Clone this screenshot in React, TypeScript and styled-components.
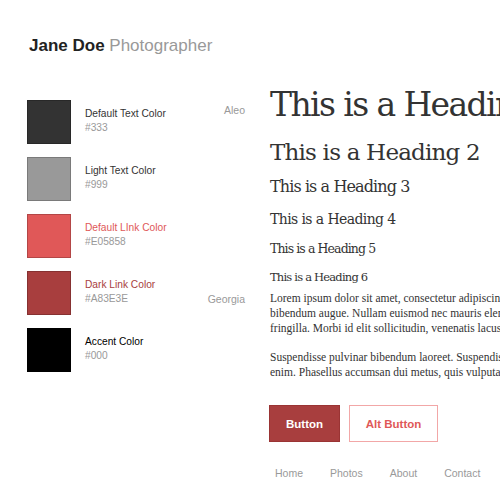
import React from "react";
import styled, { createGlobalStyle } from "styled-components";

const Global = createGlobalStyle`
  html, body { margin: 0; padding: 0; background: #fff; }
  body { width: 500px; height: 500px; overflow: hidden; font-family: "Liberation Sans", Arial, sans-serif; }
`;

const Page = styled.div`
  width: 500px;
  height: 500px;
  overflow: hidden;
  box-sizing: border-box;
  padding: 36px 0 0 29px;
`;

const Brand = styled.h1`
  margin: 0;
  font-size: 17px;
  line-height: 20px;
  font-weight: 700;
  color: #222;
  white-space: nowrap;
`;

const Sub = styled.span`
  font-weight: 400;
  color: #999;
`;

const Main = styled.div`
  display: flex;
  margin-left: -2px;
  margin-top: 27px;
`;

const Left = styled.div`
  width: 243px;
  flex: none;
  box-sizing: border-box;
  padding: 17px 25px 0 0;
  display: flex;
  flex-direction: column;
  gap: 13px;
`;

const Row = styled.div`
  display: flex;
  height: 44px;
`;

const Swatch = styled.div<{ $c: string }>`
  width: 44px;
  height: 44px;
  box-sizing: border-box;
  background: ${(p) => p.$c};
  border: 1px solid rgba(0, 0, 0, 0.2);
  flex: none;
`;

const Info = styled.div`
  margin-left: 14px;
  padding-top: 7px;
  flex: 1;
`;

const Label = styled.div<{ $c: string }>`
  font-size: 10.2px;
  line-height: 14px;
  color: ${(p) => p.$c};
  white-space: nowrap;
`;

const Hex = styled.div`
  font-size: 10.2px;
  line-height: 14px;
  color: #999;
`;

const Note = styled.div<{ $top: number }>`
  font-size: 10.5px;
  line-height: 14px;
  color: #999;
  padding-top: ${(p) => p.$top}px;
  text-align: right;
`;

const Right = styled.div`
  flex: none;
  width: 330px;
  color: #333;
`;

const H = styled.div<{ $size: number; $lh: number; $ls: number; $mb?: number }>`
  font-family: "DejaVu Serif", Georgia, serif;
  font-size: ${(p) => p.$size}px;
  line-height: ${(p) => p.$lh}px;
  letter-spacing: ${(p) => p.$ls}px;
  margin-bottom: ${(p) => p.$mb ?? 0}px;
  white-space: nowrap;
  color: #333;
`;

const Para = styled.p`
  margin: 0 0 14px;
  font-family: "Liberation Serif", Georgia, serif;
  font-size: 11.5px;
  line-height: 15px;
  white-space: nowrap;
  color: #333;
`;

const Buttons = styled.div`
  display: flex;
  gap: 9px;
  margin: 25px 0 0 -1px;
`;

const Btn = styled.button<{ $alt?: boolean }>`
  height: 37px;
  box-sizing: border-box;
  padding: 0;
  width: ${(p) => (p.$alt ? 89 : 71)}px;
  font-family: "Liberation Sans", Arial, sans-serif;
  font-weight: 700;
  font-size: 11.5px;
  background: ${(p) => (p.$alt ? "#fff" : "#A83E3E")};
  color: ${(p) => (p.$alt ? "#E05858" : "#fff")};
  border: 1px solid ${(p) => (p.$alt ? "#F2A7A7" : "#9a3434")};
`;

const Nav = styled.nav`
  display: flex;
  gap: 27px;
  margin-top: 24px;
  padding-left: 5px;
`;

const NavLink = styled.span`
  font-size: 10.5px;
  line-height: 14px;
  color: #999;
`;

const swatches = [
  { c: "#333", name: "Default Text Color", hex: "#333", lc: "#333", note: "Aleo", top: 3 },
  { c: "#999", name: "Light Text Color", hex: "#999", lc: "#333" },
  { c: "#E05858", name: "Default LInk Color", hex: "#E05858", lc: "#E05858" },
  { c: "#A83E3E", name: "Dark Link Color", hex: "#A83E3E", lc: "#A83E3E", note: "Georgia", top: 21 },
  { c: "#000", name: "Accent Color", hex: "#000", lc: "#000" },
];

export default function App() {
  return (
    <Page>
      <Global />
      <Brand>
        Jane Doe <Sub>Photographer</Sub>
      </Brand>
      <Main>
        <Left>
          {swatches.map((s) => (
            <Row key={s.name}>
              <Swatch $c={s.c} />
              <Info>
                <Label $c={s.lc}>{s.name}</Label>
                <Hex>{s.hex}</Hex>
              </Info>
              {s.note && <Note $top={s.top!}>{s.note}</Note>}
            </Row>
          ))}
        </Left>
        <Right>
          <H $size={33} $lh={44} $ls={-1.6} $mb={8}>This is a Heading 1</H>
          <H $size={23} $lh={34} $ls={-0.8} $mb={2}>This is a Heading 2</H>
          <H $size={16} $lh={32} $ls={-0.9}>This is a Heading 3</H>
          <H $size={14} $lh={32} $ls={-0.6}>This is a Heading 4</H>
          <H $size={12.5} $lh={28} $ls={-0.9}>This is a Heading 5</H>
          <H $size={11.5} $lh={28} $ls={-0.8}>This is a Heading 6</H>
          <Para>
            Lorem ipsum dolor sit amet, consectetur adipiscing elit. Sed quis
            <br />
            bibendum augue. Nullam euismod nec mauris elementum
            <br />
            fringilla. Morbi id elit sollicitudin, venenatis lacus id, dictum
          </Para>
          <Para>
            Suspendisse pulvinar bibendum laoreet. Suspendisse potenti
            <br />
            enim. Phasellus accumsan dui metus, quis vulputate
          </Para>
          <Buttons>
            <Btn>Button</Btn>
            <Btn $alt>Alt Button</Btn>
          </Buttons>
          <Nav>
            <NavLink>Home</NavLink>
            <NavLink>Photos</NavLink>
            <NavLink>About</NavLink>
            <NavLink>Contact</NavLink>
          </Nav>
        </Right>
      </Main>
    </Page>
  );
}
